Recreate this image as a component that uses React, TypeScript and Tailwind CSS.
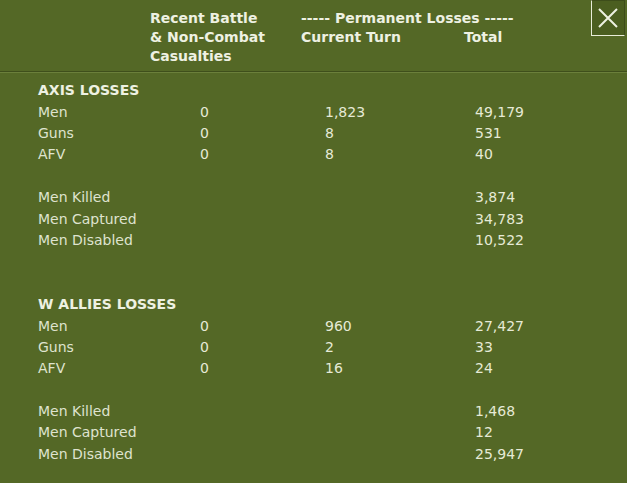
import { ReactNode } from 'react';

type Row = { label: string; recent?: string; current?: string; total?: string };

interface Section {
  title: string;
  units: Row[];
  men: Row[];
}

const sections: Section[] = [
  {
    title: 'AXIS LOSSES',
    units: [
      { label: 'Men', recent: '0', current: '1,823', total: '49,179' },
      { label: 'Guns', recent: '0', current: '8', total: '531' },
      { label: 'AFV', recent: '0', current: '8', total: '40' },
    ],
    men: [
      { label: 'Men Killed', total: '3,874' },
      { label: 'Men Captured', total: '34,783' },
      { label: 'Men Disabled', total: '10,522' },
    ],
  },
  {
    title: 'W ALLIES LOSSES',
    units: [
      { label: 'Men', recent: '0', current: '960', total: '27,427' },
      { label: 'Guns', recent: '0', current: '2', total: '33' },
      { label: 'AFV', recent: '0', current: '16', total: '24' },
    ],
    men: [
      { label: 'Men Killed', total: '1,468' },
      { label: 'Men Captured', total: '12' },
      { label: 'Men Disabled', total: '25,947' },
    ],
  },
];

function Line({ children }: { children?: ReactNode }) {
  return (
    <div className="grid h-[21.4px] grid-cols-[162px_125px_150px_1fr] items-center whitespace-nowrap">
      {children}
    </div>
  );
}

function DataRow({ row }: { row: Row }) {
  return (
    <Line>
      <span className="text-[#dfe3cf]">{row.label}</span>
      <span>{row.recent}</span>
      <span>{row.current}</span>
      <span>{row.total}</span>
    </Line>
  );
}

export default function App() {
  return (
    <div
      className="relative flex h-[483px] w-[627px] flex-col overflow-hidden bg-[#546826] text-[14px] text-[#e6ead6]"
      style={{ fontFamily: '"DejaVu Sans", sans-serif' }}
    >
      <div className="flex h-[71px] whitespace-nowrap pl-[150px] pt-[9px] font-bold leading-[19px] text-[#eef1e2]">
        <div className="w-[151px]">
          <div>Recent Battle</div>
          <div>&amp; Non-Combat</div>
          <div>Casualties</div>
        </div>
        <div>
          <div>----- Permanent Losses -----</div>
          <div className="flex">
            <span className="w-[163px]">Current Turn</span>
            <span>Total</span>
          </div>
        </div>
      </div>

      <button
        aria-label="Close"
        className="absolute right-[2px] top-0 flex h-[36px] w-[34px] items-center justify-center border border-t-[#3d4d1a] border-l-[#e9edd9] border-b-[#e9edd9] border-r-[#3d4d1a] bg-[#4b5e20]"
      >
        <svg width="22" height="22" viewBox="0 0 22 22">
          <path d="M2 2L20 20M20 2L2 20" stroke="#eef1e2" strokeWidth="2" />
        </svg>
      </button>

      <div className="h-[1px] bg-[#3f4f1b]" />
      <div className="h-[1px] bg-[#6b7f3b]" />

      <div className="pl-[38px] pt-[7px]">
        {sections.map((s, i) => (
          <div key={s.title} className={i > 0 ? 'mt-[42.8px]' : ''}>
            <Line>
              <span className="col-span-2 font-bold text-[#eef1e2]">{s.title}</span>
            </Line>
            {s.units.map((r) => (
              <DataRow key={r.label} row={r} />
            ))}
            <Line />
            {s.men.map((r) => (
              <DataRow key={r.label} row={r} />
            ))}
          </div>
        ))}
      </div>
    </div>
  );
}
